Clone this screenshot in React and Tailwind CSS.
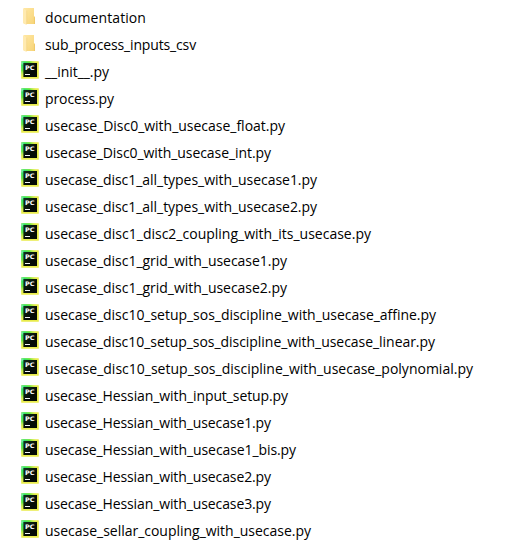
import { useLayoutEffect, useRef, useState } from "react";

// name and the width its label takes in the list
const entries = [
  ["documentation", 101],
  ["sub_process_inputs_csv", 151],
  ["__init__.py", 64],
  ["process.py", 69],
  ["usecase_Disc0_with_usecase_float.py", 240],
  ["usecase_Disc0_with_usecase_int.py", 226],
  ["usecase_disc1_all_types_with_usecase1.py", 272],
  ["usecase_disc1_all_types_with_usecase2.py", 272],
  ["usecase_disc1_disc2_coupling_with_its_usecase.py", 326],
  ["usecase_disc1_grid_with_usecase1.py", 242],
  ["usecase_disc1_grid_with_usecase2.py", 242],
  ["usecase_disc10_setup_sos_discipline_with_usecase_affine.py", 391],
  ["usecase_disc10_setup_sos_discipline_with_usecase_linear.py", 390],
  ["usecase_disc10_setup_sos_discipline_with_usecase_polynomial.py", 428],
  ["usecase_Hessian_with_input_setup.py", 243],
  ["usecase_Hessian_with_usecase1.py", 226],
  ["usecase_Hessian_with_usecase1_bis.py", 251],
  ["usecase_Hessian_with_usecase2.py", 226],
  ["usecase_Hessian_with_usecase3.py", 226],
  ["usecase_sellar_coupling_with_usecase.py", 266],
];

function FolderIcon() {
  return (
    <svg width="18" height="18" viewBox="0 0 18 18" className="shrink-0">
      <path d="M3 1H13V9L14 10V17H3Z" fill="url(#folderBack)" />
      <path d="M12.9 9.5L14 10.5V17H12.9Z" fill="#efc96a" />
      <path d="M2 1L5.7 3.5V18L2 16.2Z" fill="#ffeab0" />
      <path d="M5.7 3.5V17" stroke="#f0cf7c" strokeWidth="0.5" />
    </svg>
  );
}

function PyCharmIcon() {
  return (
    <svg width="18" height="18" viewBox="0 0 18 18" className="shrink-0">
      <rect x="0.2" y="0.2" width="17.6" height="17.6" rx="0.5" fill="#e9ec4c" />
      <rect x="0.2" y="0.2" width="17.6" height="17.6" rx="0.5" fill="url(#pyCorner)" />
      <rect x="2.4" y="2" width="13.6" height="14" fill="url(#pyScreen)" />
      <text x="3.9" y="8.6" fill="#fff" fontSize="6.2" fontWeight="700" fontFamily="DejaVu Sans, sans-serif" textLength="9.6" lengthAdjust="spacingAndGlyphs">PC</text>
      <rect x="4" y="13" width="5" height="1" fill="#f4f4f4" />
    </svg>
  );
}

function Label({ name, width }) {
  const ref = useRef(null);
  const [spacing, setSpacing] = useState(0);
  useLayoutEffect(() => {
    const natural = ref.current.getBoundingClientRect().width;
    setSpacing((width - natural) / name.length);
  }, [name, width]);
  return (
    <span ref={ref} style={{ letterSpacing: `${spacing}px` }} className="whitespace-pre pt-px">
      {name}
    </span>
  );
}

export default function App() {
  return (
    <main className="h-[551px] w-[514px] overflow-hidden bg-white pt-[3px] font-['Open_Sans','Noto_Sans',sans-serif] text-[14px] leading-[27px] text-black">
      <svg width="0" height="0" className="absolute">
        <defs>
          <linearGradient id="folderBack" x1="0" x2="1" y1="0" y2="1">
            <stop stopColor="#ffe7a3" />
            <stop offset="1" stopColor="#f7d477" />
          </linearGradient>
          <radialGradient id="pyCorner" cx="0.05" cy="0.1" r="0.85">
            <stop stopColor="#86efb4" />
            <stop offset="0.15" stopColor="#2fe36a" />
            <stop offset="0.5" stopColor="#5ce63f" />
            <stop offset="1" stopColor="#e9ec4c" stopOpacity="0" />
          </radialGradient>
          <linearGradient id="pyScreen" x1="0" x2="1" y1="0" y2="1">
            <stop stopColor="#12301a" />
            <stop offset="0.6" stopColor="#040b06" />
          </linearGradient>
        </defs>
      </svg>
      <ul>
        {entries.map(([name, width]) => (
          <li key={name} className="flex h-[27px] items-start pl-[21px]">
            <span className="mr-1.5 flex pt-[4px]">
              {name.endsWith(".py") ? <PyCharmIcon /> : <FolderIcon />}
            </span>
            <Label name={name} width={width} />
          </li>
        ))}
      </ul>
    </main>
  );
}
